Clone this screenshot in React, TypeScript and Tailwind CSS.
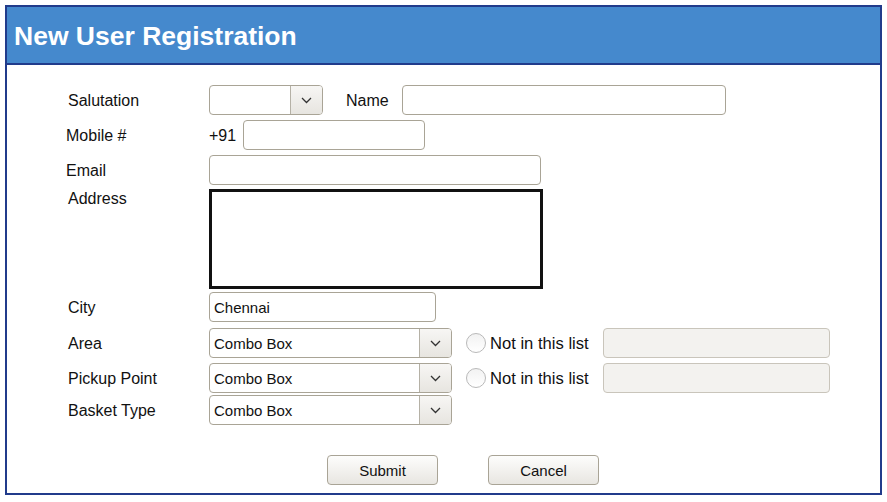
import React from "react";

function Chevron() {
  return (
    <svg width="11" height="7" viewBox="0 0 11 7" fill="none">
      <path d="M1 1l4.5 4.5L10 1" stroke="#333" strokeWidth="1.3" />
    </svg>
  );
}

function Combo({ width, text }: { width: string; text?: string }) {
  return (
    <div
      className={`${width} h-[30px] flex rounded-[4px] border border-[#a9a496] bg-white overflow-hidden`}
    >
      <div className="flex-1 flex items-center pl-[4px] pt-[2px] text-[15px] text-[#111]">
        {text}
      </div>
      <div className="w-[32px] flex items-center justify-center border-l border-[#b5b1a6] bg-gradient-to-b from-[#f7f6f4] to-[#e7e5e0]">
        <Chevron />
      </div>
    </div>
  );
}

function Input({
  width,
  text,
  disabled,
}: {
  width: string;
  text?: string;
  disabled?: boolean;
}) {
  return (
    <div
      className={`${width} h-[30px] flex items-center pl-[4px] pt-[2px] rounded-[4px] border ${
        disabled ? "border-[#c9c5bb] bg-[#f3f2ef]" : "border-[#a9a496] bg-white"
      } text-[15px] text-[#111]`}
    >
      {text}
    </div>
  );
}

function Radio() {
  return (
    <div className="w-[20px] h-[20px] rounded-full border border-[#b9b9b9] bg-gradient-to-b from-[#f2f2f2] to-white" />
  );
}

function Button({ label }: { label: string }) {
  return (
    <div className="w-[111px] h-[30px] flex items-center justify-center pt-[2px] rounded-[4px] border border-[#a9a496] bg-gradient-to-b from-[#fdfdfc] to-[#e8e6e1] text-[15px] text-[#111]">
      {label}
    </div>
  );
}

export default function App() {
  return (
    <div
      className="w-[887px] h-[502px] bg-white pt-[5px] pl-[5px]"
      style={{ fontFamily: '"Liberation Sans", Arial, sans-serif' }}
    >
      <div className="w-[877px] h-[490px] border-2 border-[#213b8b] flex flex-col text-[16px] text-[#111]">
        <div className="h-[58px] bg-[#4589cd] border-b-2 border-[#213b8b] flex items-center pl-[7px] pt-[4px]">
          <h1 className="text-[26.5px] font-bold text-white">
            New User Registration
          </h1>
        </div>

        <div className="flex flex-col pl-[59px] pt-[20px]">
          <div className="flex items-center h-[30px]">
            <div className="w-[143px] pl-[2px] pt-[2px]">Salutation</div>
            <Combo width="w-[114px]" />
            <div className="w-[79px] pl-[23px] pt-[2px]">Name</div>
            <Input width="w-[324px]" />
          </div>

          <div className="flex items-center h-[30px] mt-[5px]">
            <div className="w-[143px] pt-[2px]">Mobile #</div>
            <div className="w-[34px] pt-[2px]">+91</div>
            <Input width="w-[182px]" />
          </div>

          <div className="flex items-center h-[30px] mt-[5px]">
            <div className="w-[143px] pt-[2px]">Email</div>
            <Input width="w-[332px]" />
          </div>

          <div className="flex mt-[4px]">
            <div className="w-[143px] pl-[2px] mt-[-2px]">Address</div>
            <div className="w-[334px] h-[100px] border-[3px] border-[#111] bg-white" />
          </div>

          <div className="flex items-center h-[30px] mt-[3px]">
            <div className="w-[143px] pl-[2px] pt-[2px]">City</div>
            <Input width="w-[227px]" text="Chennai" />
          </div>

          <div className="flex items-center h-[30px] mt-[6px]">
            <div className="w-[143px] pl-[2px] pt-[2px]">Area</div>
            <Combo width="w-[243px]" text="Combo Box" />
            <div className="ml-[14px] flex items-center gap-[4px]">
              <Radio />
              <span className="text-[16.6px] pt-[2px]">Not in this list</span>
            </div>
            <div className="ml-[14px]">
              <Input width="w-[227px]" disabled />
            </div>
          </div>

          <div className="flex items-center h-[30px] mt-[5px]">
            <div className="w-[143px] pl-[2px] pt-[2px]">Pickup Point</div>
            <Combo width="w-[243px]" text="Combo Box" />
            <div className="ml-[14px] flex items-center gap-[4px]">
              <Radio />
              <span className="text-[16.6px] pt-[2px]">Not in this list</span>
            </div>
            <div className="ml-[14px]">
              <Input width="w-[227px]" disabled />
            </div>
          </div>

          <div className="flex items-center h-[30px] mt-[2px]">
            <div className="w-[143px] pl-[2px] pt-[2px]">Basket Type</div>
            <Combo width="w-[243px]" text="Combo Box" />
          </div>
        </div>

        <div className="flex pl-[320px] gap-[50px] mt-[30px]">
          <Button label="Submit" />
          <Button label="Cancel" />
        </div>
      </div>
    </div>
  );
}
